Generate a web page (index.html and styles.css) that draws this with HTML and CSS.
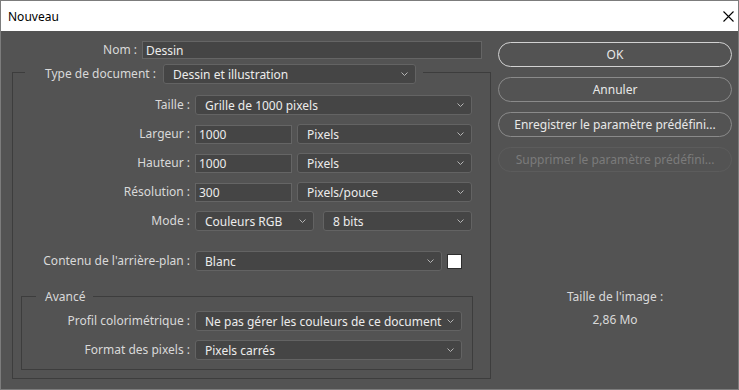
FILE: index.html
```html
<!DOCTYPE html>
<html lang="fr">

<head>
    <meta charset="UTF-8">
    <meta name="viewport" content="width=device-width, initial-scale=1.0">
    <title>Nouveau</title>

    <link rel="stylesheet" href="styles.css">
</head>

<body>
    <div class="dialog">
        <div class="titlebar">
            <span>Nouveau</span>
            <svg class="close" width="11" height="11" viewBox="0 0 11 11">
                <path d="M0.5 0.5 L10.5 10.5 M10.5 0.5 L0.5 10.5" stroke="#000" stroke-width="1.1" fill="none" />
            </svg>
        </div>

        <div class="content">
            <div class="main">
                <div class="name-row">
                    <label class="label">Nom :</label>
                    <div class="field">Dessin</div>
                </div>

                <fieldset class="group doc">
                    <legend class="doc-legend">
                        <span class="label legend-label">Type de document :</span>
                        <div class="select type-select">
                            <span>Dessin et illustration</span>
                            <svg class="chevron" width="7" height="4" viewBox="0 0 7 4"><path d="M0.5 0.5 L3.5 3.5 L6.5 0.5" /></svg>
                        </div>
                    </legend>

                    <div class="row">
                        <label class="label">Taille :</label>
                        <div class="select">
                            <span>Grille de 1000 pixels</span>
                            <svg class="chevron" width="7" height="4" viewBox="0 0 7 4"><path d="M0.5 0.5 L3.5 3.5 L6.5 0.5" /></svg>
                        </div>
                    </div>

                    <div class="row">
                        <label class="label">Largeur :</label>
                        <div class="pair">
                            <div class="field num">1000</div>
                            <div class="select">
                                <span>Pixels</span>
                                <svg class="chevron" width="7" height="4" viewBox="0 0 7 4"><path d="M0.5 0.5 L3.5 3.5 L6.5 0.5" /></svg>
                            </div>
                        </div>
                    </div>

                    <div class="row">
                        <label class="label">Hauteur :</label>
                        <div class="pair">
                            <div class="field num">1000</div>
                            <div class="select">
                                <span>Pixels</span>
                                <svg class="chevron" width="7" height="4" viewBox="0 0 7 4"><path d="M0.5 0.5 L3.5 3.5 L6.5 0.5" /></svg>
                            </div>
                        </div>
                    </div>

                    <div class="row">
                        <label class="label">Résolution :</label>
                        <div class="pair">
                            <div class="field num">300</div>
                            <div class="select">
                                <span>Pixels/pouce</span>
                                <svg class="chevron" width="7" height="4" viewBox="0 0 7 4"><path d="M0.5 0.5 L3.5 3.5 L6.5 0.5" /></svg>
                            </div>
                        </div>
                    </div>

                    <div class="row">
                        <label class="label">Mode :</label>
                        <div class="pair mode">
                            <div class="select mode-select">
                                <span>Couleurs RGB</span>
                                <svg class="chevron" width="7" height="4" viewBox="0 0 7 4"><path d="M0.5 0.5 L3.5 3.5 L6.5 0.5" /></svg>
                            </div>
                            <div class="select">
                                <span>8 bits</span>
                                <svg class="chevron" width="7" height="4" viewBox="0 0 7 4"><path d="M0.5 0.5 L3.5 3.5 L6.5 0.5" /></svg>
                            </div>
                        </div>
                    </div>

                    <div class="row bg-row">
                        <label class="label">Contenu de l'arrière-plan :</label>
                        <div class="pair">
                            <div class="select bg-select">
                                <span>Blanc</span>
                                <svg class="chevron" width="7" height="4" viewBox="0 0 7 4"><path d="M0.5 0.5 L3.5 3.5 L6.5 0.5" /></svg>
                            </div>
                            <div class="swatch"></div>
                        </div>
                    </div>

                    <fieldset class="group adv">
                        <legend class="adv-legend">Avancé</legend>

                        <div class="row adv-row">
                            <label class="label">Profil colorimétrique :</label>
                            <div class="select">
                                <span>Ne pas gérer les couleurs de ce document</span>
                                <svg class="chevron" width="7" height="4" viewBox="0 0 7 4"><path d="M0.5 0.5 L3.5 3.5 L6.5 0.5" /></svg>
                            </div>
                        </div>

                        <div class="row adv-row">
                            <label class="label">Format des pixels :</label>
                            <div class="select">
                                <span>Pixels carrés</span>
                                <svg class="chevron" width="7" height="4" viewBox="0 0 7 4"><path d="M0.5 0.5 L3.5 3.5 L6.5 0.5" /></svg>
                            </div>
                        </div>
                    </fieldset>
                </fieldset>
            </div>

            <div class="side">
                <button class="btn ok">OK</button>
                <button class="btn">Annuler</button>
                <button class="btn">Enregistrer le paramètre prédéfini...</button>
                <button class="btn disabled">Supprimer le paramètre prédéfini...</button>

                <div class="size-info">
                    <span>Taille de l'image :</span>
                    <span>2,86 Mo</span>
                </div>
            </div>
        </div>
    </div>
</body>

</html>
```

FILE: styles.css
```css
* {
    box-sizing: border-box;
    margin: 0;
    padding: 0;
}

body {
    font-family: "Noto Sans", "Open Sans", sans-serif;
    font-size: 12px;
    background-color: #535353;
    color: #dcdcdc;
}

.dialog {
    width: 739px;
    height: 390px;
    border: 1px solid #7c7c7c;
    display: flex;
    flex-direction: column;
    background-color: #535353;
}

.titlebar {
    height: 30px;
    flex-shrink: 0;
    background-color: #fff;
    color: #000;
    display: flex;
    align-items: center;
    justify-content: space-between;
    padding: 0 4px 0 7px;
}

.close {
    display: block;
}

.content {
    flex: 1;
    display: flex;
    gap: 16px;
    padding: 10px 6px 0 11px;
}

.main {
    width: 470px;
}

/* labels */
.label {
    color: #d9d9d9;
    text-align: right;
    white-space: nowrap;
    line-height: 16px;
}

/* controls */
.field {
    height: 19px;
    background-color: #454545;
    border: 1px solid #656565;
    color: #ececec;
    padding-left: 3px;
    display: flex;
    align-items: center;
    white-space: nowrap;
}

.select {
    height: 20px;
    background-color: #454545;
    border: 1px solid #636363;
    border-radius: 3px;
    color: #ececec;
    padding: 0 7px 0 9px;
    display: flex;
    align-items: center;
    justify-content: space-between;
    white-space: nowrap;
}

.chevron {
    display: block;
    flex-shrink: 0;
}

.chevron path {
    fill: none;
    stroke: #b4b4b4;
    stroke-width: 1;
}

.name-row {
    display: grid;
    grid-template-columns: 125px 340px;
    column-gap: 5px;
    align-items: center;
    height: 18px;
}

.name-row .field {
    height: 18px;
}

/* group boxes */
.group {
    border: 1px solid #3d3d3d;
}

.doc {
    margin-top: 2px;
    padding: 11px 9px 8px 0;
}

.doc-legend {
    display: flex;
    align-items: center;
    gap: 8px;
    margin-left: 12px;
    padding: 3px 7px 0 20px;
}

.legend-label {
    width: 110px;
}

.type-select {
    width: 253px;
}

.row {
    display: grid;
    grid-template-columns: 177px 277px;
    column-gap: 5px;
    align-items: center;
    height: 20px;
    margin-bottom: 9px;
}

.pair {
    display: flex;
    gap: 5px;
    align-items: center;
}

.pair .select {
    flex: 1;
}

.num {
    width: 97px;
}

.mode {
    gap: 9px;
}

.pair .mode-select {
    flex: 0 0 119px;
}

.bg-row {
    margin-top: 20px;
    margin-bottom: 0;
}

.pair .bg-select {
    flex: 0 0 247px;
}

.swatch {
    width: 15px;
    height: 15px;
    background-color: #fff;
    border: 1px solid #2e2e2e;
}

.adv {
    margin: 17px 8px 0 8px;
    padding: 6px 10px 9px 0;
}

.adv-legend {
    margin-left: 14px;
    padding: 0 8px 0 9px;
    line-height: 17px;
    color: #d9d9d9;
}

.adv-row {
    grid-template-columns: 168px 267px;
}

.adv-row:last-child {
    margin-bottom: 0;
}

/* buttons */
.side {
    width: 234px;
    padding-top: 1px;
    display: flex;
    flex-direction: column;
    gap: 10px;
}

.btn {
    height: 25px;
    background-color: transparent;
    border: 1px solid #8a8a8a;
    border-radius: 13px;
    color: #e8e8e8;
    font-family: inherit;
    font-size: 12px;
    cursor: pointer;
    white-space: nowrap;
}

.btn.ok {
    border-color: #d2d2d2;
}

.btn.disabled {
    border-color: #5c5c5c;
    color: #7b7b7b;
    cursor: default;
}

.size-info {
    margin-top: 107px;
    display: flex;
    flex-direction: column;
    align-items: center;
    gap: 7px;
    line-height: 16px;
    color: #d9d9d9;
}
```
